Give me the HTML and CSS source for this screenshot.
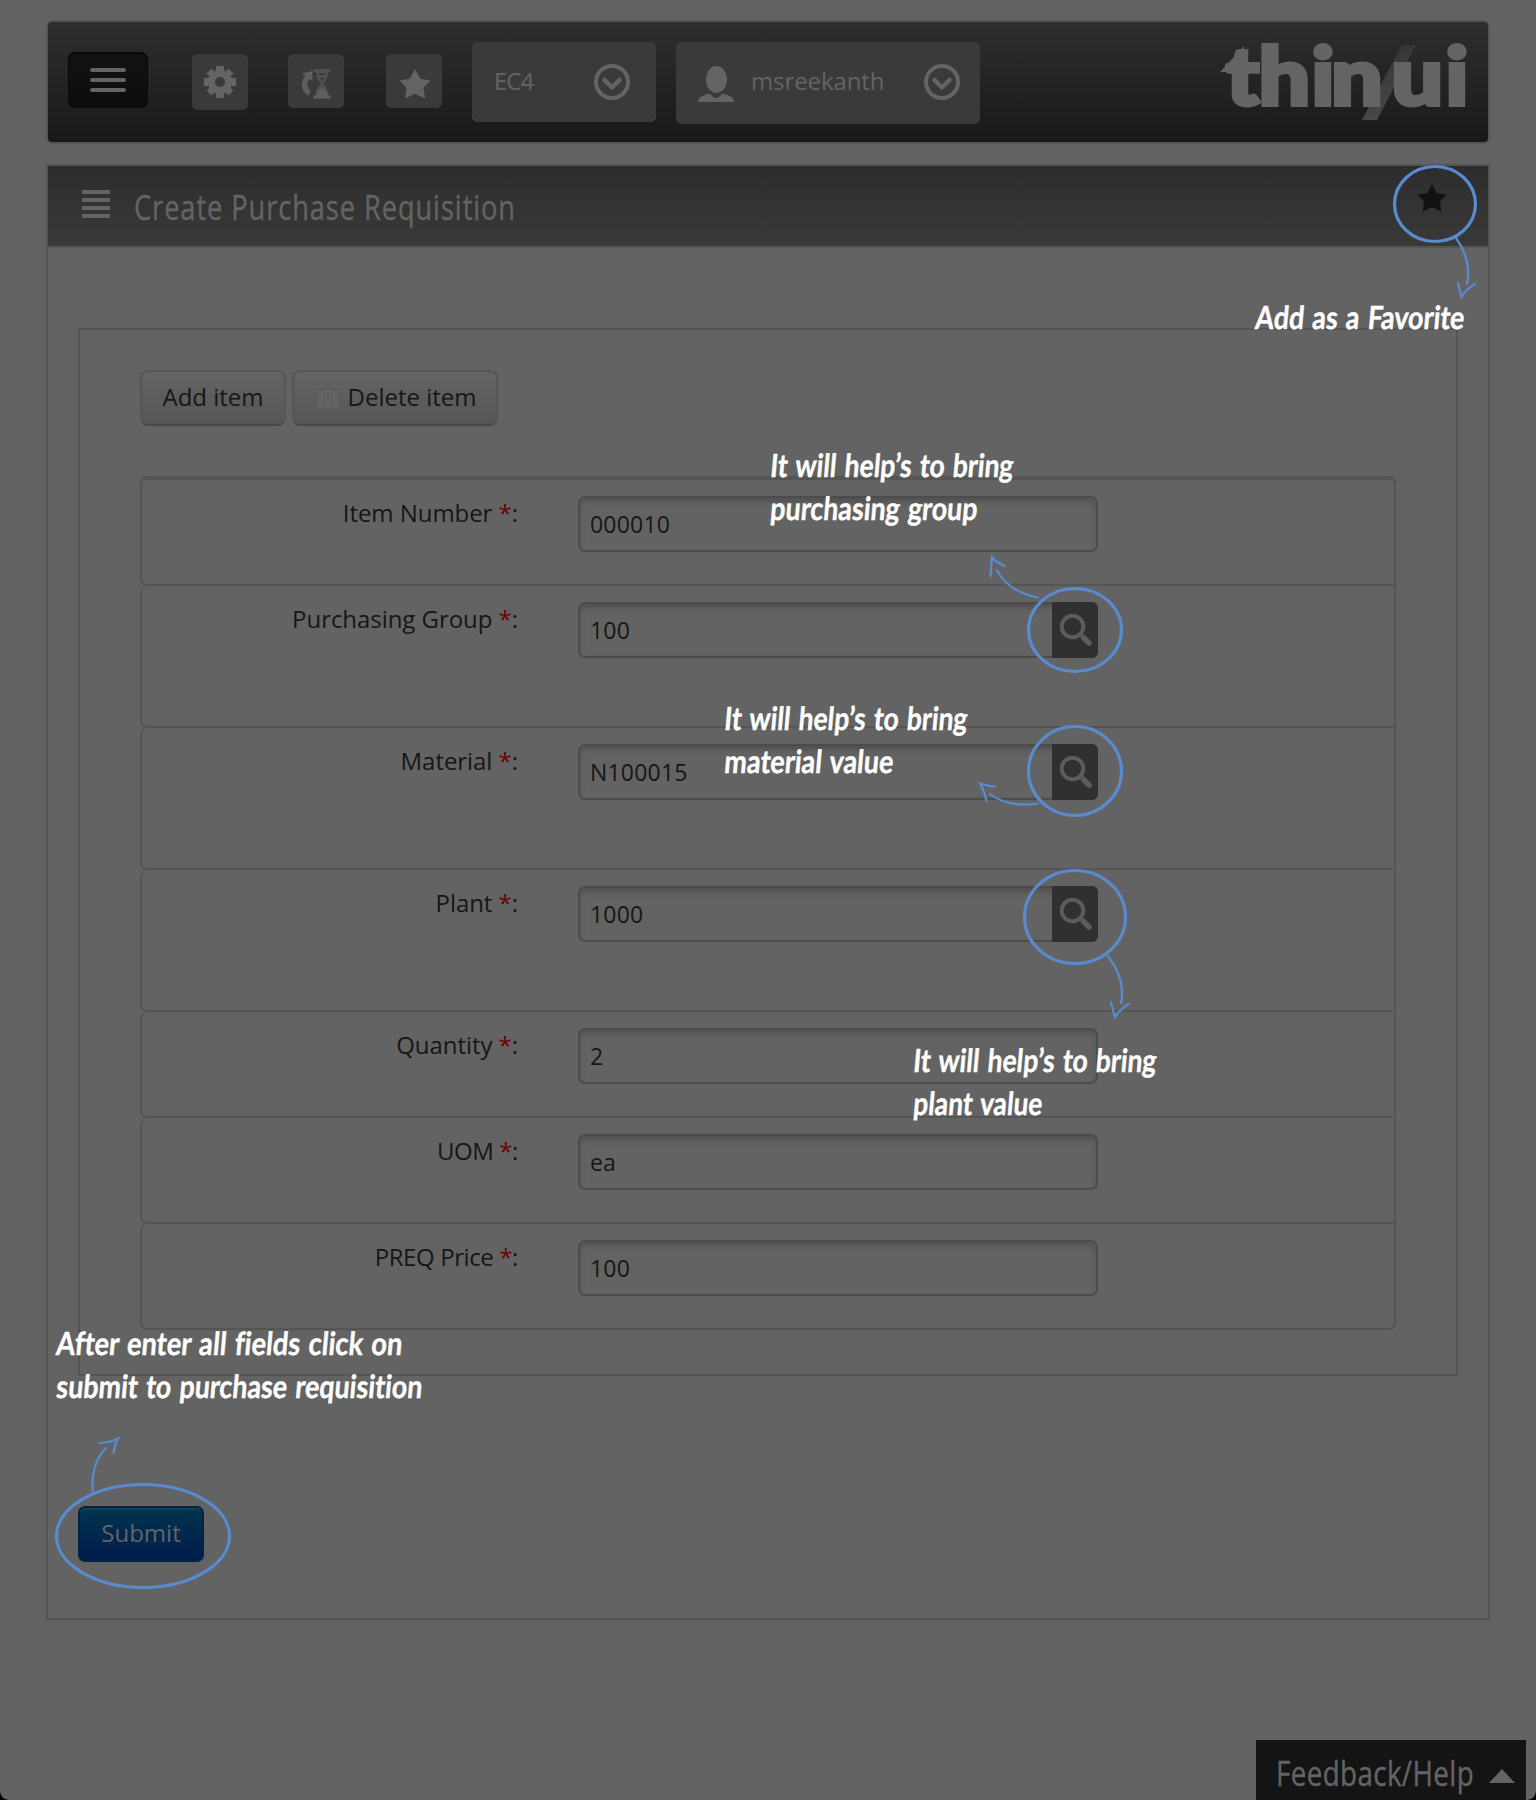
FILE: index.html
```html
<!DOCTYPE html>
<html lang="en">
<head>
<meta charset="utf-8">
<title>Create Purchase Requisition</title>
<link rel="stylesheet" href="styles.css">
</head>
<body>
<svg class="defs" width="0" height="0">
  <symbol id="star" viewBox="0 0 32 30"><path d="M16 0l5.300 9.800L31.500 11.500l-7 7.300L26 29.500l-10-4.800L6 29.500l1.500-10.700L.5 11.500l10.200-1.700z"/></symbol>
  <symbol id="chev" viewBox="0 0 36 36"><g fill="none" stroke="currentColor"><circle cx="18" cy="18" r="16" stroke-width="4"/><path d="M10.500 16l7.500 7.500 7.500-7.500" stroke-width="4.500" stroke-linecap="round" stroke-linejoin="round"/></g></symbol>
  <symbol id="search" viewBox="0 0 32 32"><g fill="none" stroke="currentColor"><circle cx="12.500" cy="12.500" r="10.800" stroke-width="4"/><path d="M20.500 20.500l3 3" stroke-width="3"/><path d="M23.500 23.500l5.500 5.500" stroke-width="5.500" stroke-linecap="round"/></g></symbol>
</svg>
<div class="page">
  <header class="topbar">
    <button class="menu"><i></i><i></i><i></i></button>
    <button class="tool tool-gear">
      <svg width="32" height="32" viewBox="-16 -16 32 32"><circle r="8.500" fill="none" stroke="currentColor" stroke-width="7"/><g stroke="currentColor" stroke-width="8"><path d="M0-16v6M0 16v-6M-16 0h6M16 0h-6"/><path stroke-width="7" d="M-11-11l4 4M11-11l-4 4M-11 11l4-4M11 11l-4-4"/></g></svg>
    </button>
    <button class="tool tool-history">
      <svg width="30" height="30" viewBox="0 0 30 30"><path d="M8.500 24.500C2 19.500 2 12 8 7" fill="none" stroke="currentColor" stroke-width="5.500"/><path d="M1 4.500l10.500-2.500v10z" fill="currentColor"/><path d="M12.500 0h17v3h-2.500c0 6-2 8-5 11.500 3 3.500 5 6 5 12h2.500v3h-17v-3H15c0-6 2-8.500 5-12-3-3.500-5-5.500-5-11.500h-2.500z" fill="currentColor" opacity=".65"/><path d="M17 4h8c-.5 1-1 1.500-2 2h-4c-1-.5-1.500-1-2-2zM19 9h4l-2 3.500z" fill="#3a3a3a"/><path d="M12.500 29.500v-3H15c.5-5 3-7 6-7s5.500 2 6 7h2.500v3z" fill="currentColor"/></svg>
    </button>
    <button class="tool tool-star"><svg width="32" height="30"><use href="#star"/></svg></button>
    <div class="select system"><span>EC4</span><svg width="36" height="36"><use href="#chev"/></svg></div>
    <div class="select user">
      <svg width="36" height="36" viewBox="0 0 36 36"><ellipse cx="18.500" cy="13.500" rx="10.500" ry="13.500" fill="currentColor"/><path d="M0 36c0-5 4-6.500 12-8.500 2 3 4 4.500 6 4.500s4-1.500 6-4.500c8 2 12 3.500 12 8.500z" fill="currentColor"/></svg>
      <span>msreekanth</span><svg class="end" width="36" height="36"><use href="#chev"/></svg>
    </div>
    <svg class="logo" width="250" height="120" viewBox="1218 22 250 120">
      <defs><linearGradient id="slash" x1="0" y1="0" x2="0" y2="1"><stop offset="0" stop-color="#363636"/><stop offset="1" stop-color="#484848"/></linearGradient></defs>
      <path d="M1402 45h14l-39 75h-15z" fill="url(#slash)"/>
      <path d="M1220 72l24-26v26z" fill="currentColor"/>
      <g class="letters">
        <text transform="translate(1226 104.500) scale(1.100 1)">t</text>
        <text transform="translate(1258.500 104.500) scale(1.140 1)">h</text>
        <text transform="translate(1311.500 104.500) scale(1.100 1)">i</text>
        <text transform="translate(1331 104.500) scale(1.140 1)">n</text>
        <text transform="translate(1391.500 104.500) scale(1.140 1)">u</text>
        <text transform="translate(1445.500 104.500) scale(1.100 1)">i</text>
      </g>
    </svg>
  </header>

  <main class="panel">
    <div class="titlebar">
      <div class="list"><i></i><i></i><i></i><i></i></div>
      <svg class="title" width="390" height="60"><text x="0" y="40" textLength="382" lengthAdjust="spacingAndGlyphs">Create Purchase Requisition</text></svg>
      <svg class="fav" width="30" height="28"><use href="#star"/></svg>
    </div>
    <section class="box">
      <div class="actions">
        <button class="btn">Add item</button>
        <button class="btn del"><svg width="24" height="27" viewBox="0 0 24 27" fill="none" stroke="#5c5c5c" stroke-width="1.500"><path d="M0 5h24M9 1.500h6"/><path d="M3 7v16h18V7z" fill="#646464" stroke="#666"/><path d="M8 9v12M12 9v12M16 9v12" stroke="#606060"/><path d="M3 25.500h18"/></svg>Delete item</button>
      </div>
      <div class="form">
        <div class="row first"><label>Item Number <b>*</b>:</label><div class="input">000010</div></div>
        <div class="row tall"><label>Purchasing Group <b>*</b>:</label><div class="input">100<span class="find"><svg width="32" height="32"><use href="#search"/></svg></span></div></div>
        <div class="row tall"><label>Material <b>*</b>:</label><div class="input">N100015<span class="find"><svg width="32" height="32"><use href="#search"/></svg></span></div></div>
        <div class="row tall"><label>Plant <b>*</b>:</label><div class="input">1000<span class="find"><svg width="32" height="32"><use href="#search"/></svg></span></div></div>
        <div class="row"><label>Quantity <b>*</b>:</label><div class="input">2</div></div>
        <div class="row"><label class="caps">UOM <b>*</b>:</label><div class="input">ea</div></div>
        <div class="row last"><label class="caps">PREQ Price <b>*</b>:</label><div class="input">100</div></div>
      </div>
    </section>
    <button class="submit">Submit</button>
  </main>

  <div class="feedback">
    <svg width="254" height="60" viewBox="1272 1740 254 60"><text x="1276" y="1786" textLength="198" lengthAdjust="spacingAndGlyphs">Feedback/Help</text><path d="M1489 1783l13-14 13 14z" fill="currentColor"/></svg>
  </div>

  <svg class="coach" width="1536" height="1800" viewBox="0 0 1536 1800">
    <g class="rings">
      <ellipse cx="1435" cy="204" rx="40.500" ry="37.500"/>
      <ellipse cx="1075" cy="630" rx="46.500" ry="41.500"/>
      <ellipse cx="1075" cy="771" rx="46.500" ry="44.500"/>
      <ellipse cx="1075" cy="917" rx="50.500" ry="46.500"/>
      <ellipse cx="143" cy="1536" rx="86.500" ry="51.500"/>
    </g>
    <g class="arrows">
      <path d="M1456 238Q1472 260 1467 284M1458 283L1461.500 297Q1466 289 1475 284"/>
      <path d="M1038 597.500Q1009 592 997 570.500M990.500 576L992 557Q997 563 1004.500 566"/>
      <path d="M1038 803.500Q1008 808 990 794M986.500 801Q985 792 980 783.500Q987 786 995 786.500"/>
      <path d="M1108 956Q1126 980 1121 1003M1111 1002.500L1115 1017Q1121 1008 1129 1004"/>
      <path d="M92.500 1491Q91 1463 106 1448M99 1443Q109 1443 118 1438.500Q114 1446 113.500 1453"/>
    </g>
    <g class="notes">
      <text x="1254" y="329" textLength="209" lengthAdjust="spacingAndGlyphs">Add as a Favorite</text>
      <text x="769" y="477" textLength="243" lengthAdjust="spacingAndGlyphs">It will help’s to bring</text>
      <text x="769" y="520" textLength="207" lengthAdjust="spacingAndGlyphs">purchasing group</text>
      <text x="723" y="730" textLength="243" lengthAdjust="spacingAndGlyphs">It will help’s to bring</text>
      <text x="723" y="773" textLength="169" lengthAdjust="spacingAndGlyphs">material value</text>
      <text x="912" y="1072" textLength="243" lengthAdjust="spacingAndGlyphs">It will help’s to bring</text>
      <text x="912" y="1115" textLength="129" lengthAdjust="spacingAndGlyphs">plant value</text>
      <text x="55" y="1355" textLength="346" lengthAdjust="spacingAndGlyphs">After enter all fields click on</text>
      <text x="55" y="1398" textLength="366" lengthAdjust="spacingAndGlyphs">submit to purchase requisition</text>
    </g>
  </svg>
</div>
</body>
</html>
```
FILE: styles.css
```css
* { box-sizing: border-box; }
body { margin: 0; background: #000; font-family: "Open Sans", "Noto Sans", sans-serif; font-size: 24px; color: #161616; }
button { font: inherit; border: 0; padding: 0; margin: 0; }
svg { display: block; flex: none; }
.defs { position: absolute; }
.page { position: relative; width: 1536px; height: 1800px; padding: 20px 46px 0; background: #636363; border-radius: 0 0 9px 9px; overflow: hidden; }

.topbar { display: flex; align-items: flex-start; height: 124px; padding: 20px 20px 0; border: 2px solid #555; border-radius: 6px; background: linear-gradient(#2e2e2e, #191919); color: #646464; }
.menu { display: flex; flex-direction: column; align-items: center; gap: 6px; width: 80px; height: 56px; margin-top: 10px; padding-top: 16px; border-radius: 8px; background: linear-gradient(#131313, #0c0c0c); box-shadow: inset 0 2px 1px #090909, inset 0 0 0 1px #0b0b0b; }
.menu i { width: 36px; height: 4px; border-radius: 2px; background: #646464; }
.tool { display: flex; justify-content: center; width: 56px; height: 54px; border-radius: 5px; background: #3a3a3a; color: #646464; fill: currentColor; margin-top: 12px; }
.tool-gear { height: 56px; margin-left: 44px; padding-top: 12px; }
.tool-history { margin-left: 40px; padding-top: 15px; color: #5e5e5e; }
.tool-star { margin-left: 42px; padding: 15px 0 0 1px; }
.select { display: flex; align-items: flex-start; height: 80px; border-radius: 5px; background: #3a3a3a; }
.select span { line-height: 34px; padding-top: 2px; margin-top: 20px; }
.select svg { margin-top: 22px; }
.system { width: 184px; margin-left: 30px; justify-content: space-between; padding: 0 26px 0 22px; }
.system span { letter-spacing: -1px; }
.user { width: 304px; height: 82px; margin-left: 20px; padding: 0 20px 0 22px; }
.user svg:first-child { margin-top: 24px; }
.user span { margin-left: 17px; letter-spacing: -.1px; }
.user .end { margin-left: auto; }
.logo { margin: -20px 0 0 auto; color: #646464; }
.letters text { font: 900 80px Lato, sans-serif; fill: currentColor; stroke: currentColor; stroke-width: 4; }

.panel { height: 1456px; margin-top: 20px; border: 2px solid #555; }
.titlebar { display: flex; height: 82px; padding: 0 41px 0 34px; border-bottom: 2px solid #555; background: linear-gradient(#2d2d2d, #393939); }
.list { display: flex; flex-direction: column; gap: 4px; padding-top: 24px; width: 28px; }
.list i { height: 4px; border-radius: 1px; background: #646464; }
.title { margin: 14px 0 0 24px; }
.title text, .feedback text { font-family: "Open Sans", sans-serif; font-size: 35px; fill: #646464; stroke: #646464; stroke-width: .4; letter-spacing: 1.200px; }
.feedback text { letter-spacing: .5px; }
.fav { margin: 18px 0 0 auto; fill: #131111; }
.box { height: 1048px; margin: 80px 30px 0; padding: 40px 60px 0; border: 2px solid #555; }
.actions { display: flex; gap: 6px; }
.btn { display: flex; justify-content: center; height: 56px; width: 146px; padding-top: 8px; border: 2px solid #565656; border-bottom-color: #484848; border-radius: 8px; background: linear-gradient(#646464, #565656); color: #161616; line-height: 33px; }
.del { width: 206px; padding-left: 2px; }
.del svg { margin: 4px 8px 0 0; }
.form { margin-top: 50px; }
.row { display: flex; align-items: flex-start; height: 106px; padding-top: 16px; border: 2px solid #555; border-top: 0; border-radius: 7px 0 0 7px; }
.row.first { height: 110px; border-top: 4px solid #555; border-top-right-radius: 7px; }
.row.last { border-bottom-right-radius: 7px; }
.row.tall { height: 142px; }
.row label { width: 376px; text-align: right; line-height: 34px; letter-spacing: -.05px; }
.row .caps { letter-spacing: -.4px; }
.row b { color: #6b0000; font-weight: 400; }
.input { display: flex; justify-content: space-between; width: 520px; height: 56px; margin-left: 60px; padding-left: 10px; border: 2px solid #4c4c4c; border-radius: 7px; box-shadow: inset 0 4px 5px #525252; line-height: 52px; font-size: 23px; letter-spacing: .2px; }
.find { width: 46px; height: 56px; margin: -2px; padding: 12px 0 0 8px; border-radius: 0 6px 6px 0; background: #303030; color: #5c5c5c; }
.submit { display: block; width: 126px; height: 56px; margin: 130px 0 0 30px; padding-bottom: 4px; border: 2px solid #002540; border-radius: 7px; background: linear-gradient(#00344f, #001c4c); color: #646464; box-shadow: inset 0 2px 1px #12405a; }

.feedback { position: absolute; right: 10px; bottom: 0; width: 270px; height: 60px; padding-left: 16px; background: #141414; color: #646464; }
.coach { position: absolute; left: 0; top: 0; }
.rings, .arrows { fill: none; stroke: #588bd0; stroke-width: 3.200; }
.arrows { stroke-width: 2.200; stroke-linecap: round; }
.notes text { font: 700 32px Lato, sans-serif; font-variant-ligatures: none; fill: #fff; stroke: #fff; stroke-width: .4; word-spacing: 2px; transform-box: fill-box; transform-origin: left bottom; transform: skewX(-5deg); }
```
